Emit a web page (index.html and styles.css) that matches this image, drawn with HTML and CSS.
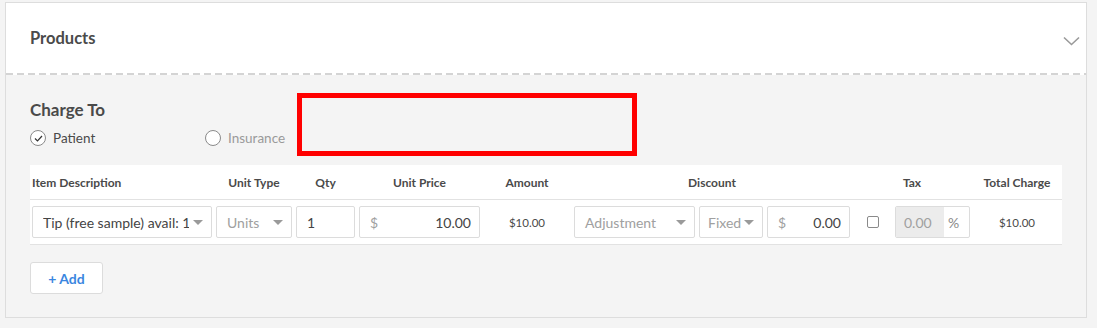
FILE: index.html
```html
<!DOCTYPE html>
<html lang="en">

<head>
    <meta charset="UTF-8">
    <meta name="viewport" content="width=device-width, initial-scale=1.0">
    <title>Products</title>
    <link rel="stylesheet" href="styles.css">
</head>

<body>
    <div class="card">
        <div class="card-header">
            <span>Products</span>
            <svg class="chevron" width="17" height="10" viewBox="0 0 17 10">
                <path d="M1 1.5 L8.5 8.5 L16 1.5" fill="none" stroke="#9a9a9a" stroke-width="1.6" />
            </svg>
        </div>
        <div class="divider"></div>
        <div class="card-body">
            <div class="highlight-box"></div>
            <h3 class="charge-title">Charge To</h3>
            <div class="charge-options">
                <label class="radio-option checked">
                    <span class="radio">
                        <svg width="9" height="7" viewBox="0 0 9 7">
                            <path d="M1 3.5 L3.5 6 L8 1" fill="none" stroke="#333" stroke-width="1.2" />
                        </svg>
                    </span>
                    Patient
                </label>
                <label class="radio-option muted">
                    <span class="radio"></span>
                    Insurance
                </label>
            </div>

            <div class="products-table">
                <div class="table-row table-head">
                    <div class="th left">Item Description</div>
                    <div class="th">Unit Type</div>
                    <div class="th">Qty</div>
                    <div class="th">Unit Price</div>
                    <div class="th">Amount</div>
                    <div class="th span-3">Discount</div>
                    <div class="th span-2">Tax</div>
                    <div class="th">Total Charge</div>
                </div>
                <div class="table-row table-body">
                    <div class="field select">
                        <span class="field-text clip">Tip (free sample) avail: 10</span>
                        <span class="caret"></span>
                    </div>
                    <div class="field select placeholder">
                        <span class="field-text">Units</span>
                        <span class="caret"></span>
                    </div>
                    <div class="field">
                        <span class="field-text">1</span>
                    </div>
                    <div class="field money">
                        <span class="prefix">$</span>
                        <span class="field-text right">10.00</span>
                    </div>
                    <div class="cell-text">$10.00</div>
                    <div class="field select placeholder">
                        <span class="field-text">Adjustment</span>
                        <span class="caret"></span>
                    </div>
                    <div class="field select placeholder compact">
                        <span class="field-text">Fixed</span>
                        <span class="caret"></span>
                    </div>
                    <div class="field money">
                        <span class="prefix">$</span>
                        <span class="field-text right">0.00</span>
                    </div>
                    <div class="cell-check"><span class="checkbox"></span></div>
                    <div class="field tax">
                        <span class="tax-value">0.00</span>
                        <span class="suffix">%</span>
                    </div>
                    <div class="cell-text">$10.00</div>
                </div>
            </div>

            <button class="add-button">+ Add</button>
        </div>
    </div>
</body>

</html>
```

FILE: styles.css
```css
body {
    margin: 0;
    padding: 2px 10px 0 5px;
    background-color: #f4f4f4;
    font-family: Lato, "Open Sans", Arial, sans-serif;
    color: #4a4a4a;
}

.card {
    border: 1px solid #dddddd;
    background-color: #f4f4f4;
}

.card-header {
    display: flex;
    justify-content: space-between;
    align-items: center;
    height: 70px;
    padding: 0 6px 0 24px;
    background-color: #ffffff;
    font-size: 16.5px;
    font-weight: bold;
    color: #4a4a4a;
}

.divider {
    height: 2px;
    background-color: #ffffff;
    background-image: repeating-linear-gradient(90deg, #d4d4d4 0, #d4d4d4 7px, transparent 7px, transparent 11px);
}

.chevron {
    margin-top: 6px;
}

.card-body {
    position: relative;
    padding: 25px 24px 23px 24px;
}

.highlight-box {
    position: absolute;
    left: 291px;
    top: 18px;
    width: 340px;
    height: 63px;
    box-sizing: border-box;
    border: 5px solid #ff0000;
}

.charge-title {
    margin: 0;
    font-size: 17px;
    line-height: 20px;
    font-weight: bold;
    color: #4a4a4a;
}

.charge-options {
    display: flex;
    margin-top: 8px;
    height: 20px;
    align-items: center;
    font-size: 13.5px;
}

.radio-option {
    display: flex;
    align-items: center;
    gap: 7px;
    color: #4a4a4a;
}

.radio-option.checked {
    width: 175px;
}

.radio-option.muted {
    color: #9a9a9a;
}

.radio {
    display: flex;
    justify-content: center;
    align-items: center;
    width: 14px;
    height: 14px;
    border: 1px solid #8a8a8a;
    border-radius: 50%;
    background-color: #ffffff;
}

.products-table {
    margin-top: 17px;
    padding: 0 2px;
    background-color: #ffffff;
}

.table-row {
    display: grid;
    grid-template-columns: 180px 76px 59px 121px 86px 121px 64px 83px 37px 75px 86px;
    column-gap: 4px;
    align-items: center;
}

.table-head {
    height: 34px;
    border-bottom: 1px solid #e2e2e2;
    margin: 0 -2px;
    padding: 0 2px;
}

.th {
    font-size: 12px;
    font-weight: bold;
    text-align: center;
    color: #4a4a4a;
}

.th.left {
    text-align: left;
}

.th.span-3 {
    grid-column: span 3;
}

.th.span-2 {
    grid-column: span 2;
}

.table-body {
    height: 44px;
    border-bottom: 1px solid #e2e2e2;
    margin: 0 -2px;
    padding: 0 2px;
}

.field {
    display: flex;
    align-items: center;
    height: 32px;
    box-sizing: border-box;
    padding: 0 8px 0 10px;
    border: 1px solid #dcdcdc;
    border-radius: 2px;
    background-color: #ffffff;
    font-size: 14px;
    color: #444444;
    overflow: hidden;
}

.field-text {
    flex: 1;
    white-space: nowrap;
}

.field-text.clip {
    overflow: hidden;
    margin-right: 4px;
}

.field-text.right {
    text-align: right;
}

.select.placeholder {
    color: #a0a0a0;
}

.select.compact {
    padding-left: 8px;
}

.caret {
    width: 0;
    height: 0;
    border-left: 5px solid transparent;
    border-right: 5px solid transparent;
    border-top: 5px solid #9a9a9a;
}

.prefix {
    color: #a0a0a0;
    margin-right: 6px;
}

.cell-text {
    font-size: 11.5px;
    text-align: center;
    color: #4a4a4a;
}

.cell-check {
    display: flex;
    justify-content: center;
}

.checkbox {
    width: 10px;
    height: 10px;
    border: 1px solid #8a8a8a;
    border-radius: 2px;
    background-color: #ffffff;
}

.field.tax {
    padding: 0;
}

.tax-value {
    display: flex;
    align-items: center;
    width: 48px;
    height: 100%;
    padding-left: 8px;
    box-sizing: border-box;
    background-color: #ececec;
    color: #a0a0a0;
}

.suffix {
    margin-left: 4px;
    color: #8a8a8a;
}

.add-button {
    display: block;
    margin-top: 17px;
    width: 73px;
    height: 32px;
    border: 1px solid #dcdcdc;
    border-radius: 3px;
    background-color: #ffffff;
    color: #3a86e0;
    font-family: Lato, "Open Sans", Arial, sans-serif;
    font-size: 14px;
    font-weight: bold;
    cursor: pointer;
}
```
